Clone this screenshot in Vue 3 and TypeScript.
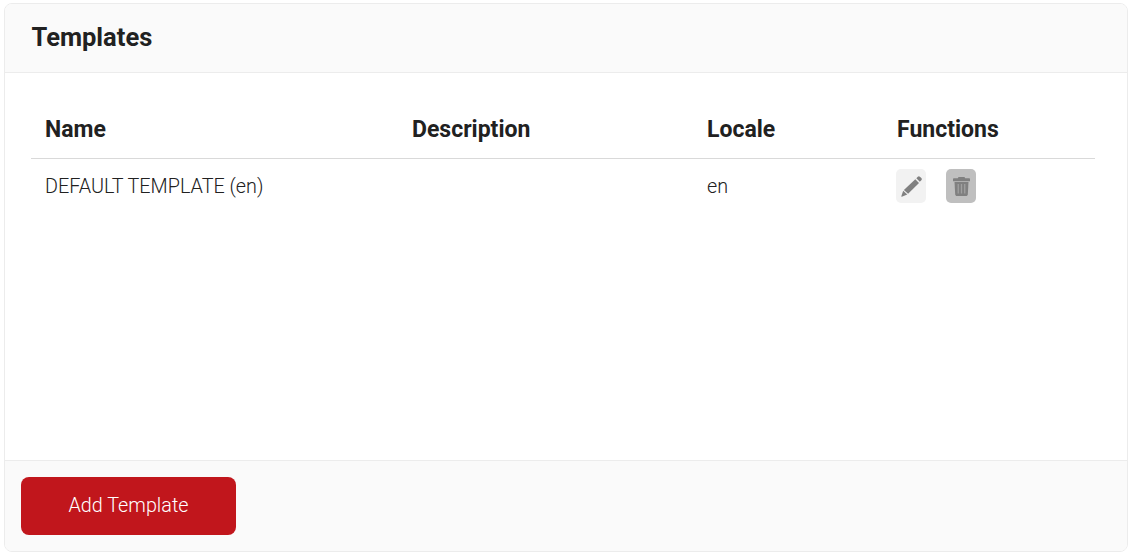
<template>
  <div class="page">
    <section class="card">
      <header class="card-header">
        <h2>Templates</h2>
      </header>

      <div class="card-body">
        <table class="table">
          <colgroup>
            <col class="col-name" />
            <col class="col-desc" />
            <col class="col-locale" />
            <col />
          </colgroup>
          <thead>
            <tr>
              <th>Name</th>
              <th>Description</th>
              <th>Locale</th>
              <th>Functions</th>
            </tr>
          </thead>
          <tbody>
            <tr v-for="t in templates" :key="t.name">
              <td>{{ t.name }}</td>
              <td>{{ t.description }}</td>
              <td>{{ t.locale }}</td>
              <td>
                <div class="actions">
                  <button class="icon-btn edit" aria-label="Edit">
                    <svg width="21" height="21" viewBox="0 0 21 21">
                      <path fill="currentColor" d="M15.300 2.200 16.800.7a1.500 1.500 0 0 1 2.100 0l1.400 1.400a1.500 1.500 0 0 1 0 2.100l-1.500 1.500z" />
                      <path fill="currentColor" d="M14.300 3.200 18 6.900 7.100 17.800 2.900 13.900z" />
                      <path fill="currentColor" d="M2.200 14.700 6.300 18.600.8 20.700c-.3.100-.6-.2-.5-.5z" />
                    </svg>
                  </button>
                  <button class="icon-btn del" aria-label="Delete">
                    <svg width="17" height="19" viewBox="0 0 17 19">
                      <path fill="currentColor" d="M5.500 0h6l.7 1.200h3.800c.6 0 1 .4 1 1v2H0v-2c0-.6.400-1 1-1h3.800z" />
                      <path fill="currentColor" d="M1.500 5h14l-.7 12.500c-.1.900-.8 1.500-1.700 1.500H3.900c-.9 0-1.600-.6-1.700-1.500z" />
                      <path fill="#a0a0a0" d="M4.600 7h1.300v9.500H4.600zM7.850 7h1.300v9.500h-1.300zM11.100 7h1.300v9.500h-1.300z" />
                    </svg>
                  </button>
                </div>
              </td>
            </tr>
          </tbody>
        </table>
      </div>

      <footer class="card-footer">
        <button class="add-btn">Add Template</button>
      </footer>
    </section>
  </div>
</template>

<script setup lang="ts">
interface Template {
  name: string
  description: string
  locale: string
}

const templates: Template[] = [
  { name: 'DEFAULT TEMPLATE (en)', description: '', locale: 'en' },
]
</script>

<style>
body {
  background: #fff;
}
</style>

<style scoped>
.page {
  padding: 3px 3px 3px 4px;
  font-family: Roboto, "Liberation Sans", sans-serif;
  color: #212121;
}

.card {
  height: 549px;
  box-sizing: border-box;
  display: flex;
  flex-direction: column;
  border: 1px solid #ececec;
  border-radius: 8px;
  overflow: hidden;
}

.card-header {
  height: 69px;
  box-sizing: border-box;
  display: flex;
  align-items: center;
  padding: 0 27px 2px 26.500px;
  background: #fafafa;
  border-bottom: 1px solid #ececec;
}

.card-header h2 {
  margin: 0;
  font-size: 25.500px;
  font-weight: 700;
  color: #212121;
}

.card-body {
  flex: 1;
  padding: 28px 32px 0 26px;
}

.table {
  width: 100%;
  border-collapse: collapse;
  table-layout: fixed;
}

.col-name {
  width: 367px;
}

.col-desc {
  width: 295px;
}

.col-locale {
  width: 190px;
}

th {
  height: 57px;
  padding: 0 14px;
  text-align: left;
  font-size: 23px;
  font-weight: 700;
  border-bottom: 1px solid #d9d9d9;
}

td {
  height: 54px;
  padding: 0 14px;
  font-size: 19.800px;
  font-weight: 300;
}

.actions {
  display: flex;
  gap: 20px;
  margin-left: -1px;
}

.icon-btn {
  width: 30px;
  height: 34px;
  padding: 0;
  display: flex;
  align-items: center;
  justify-content: center;
  border: none;
  border-radius: 5px;
  color: #808080;
}

.icon-btn.edit {
  background: #f2f2f2;
}

.icon-btn.del {
  background: #bfbfbf;
}

.card-footer {
  height: 91px;
  box-sizing: border-box;
  padding: 16px;
  background: #fafafa;
  border-top: 1px solid #ececec;
}

.add-btn {
  width: 215px;
  height: 58px;
  padding: 0 0 2px;
  border: none;
  border-radius: 8px;
  background: #c1161c;
  color: #fff;
  font-family: inherit;
  font-size: 19.800px;
  font-weight: 300;
}
</style>
